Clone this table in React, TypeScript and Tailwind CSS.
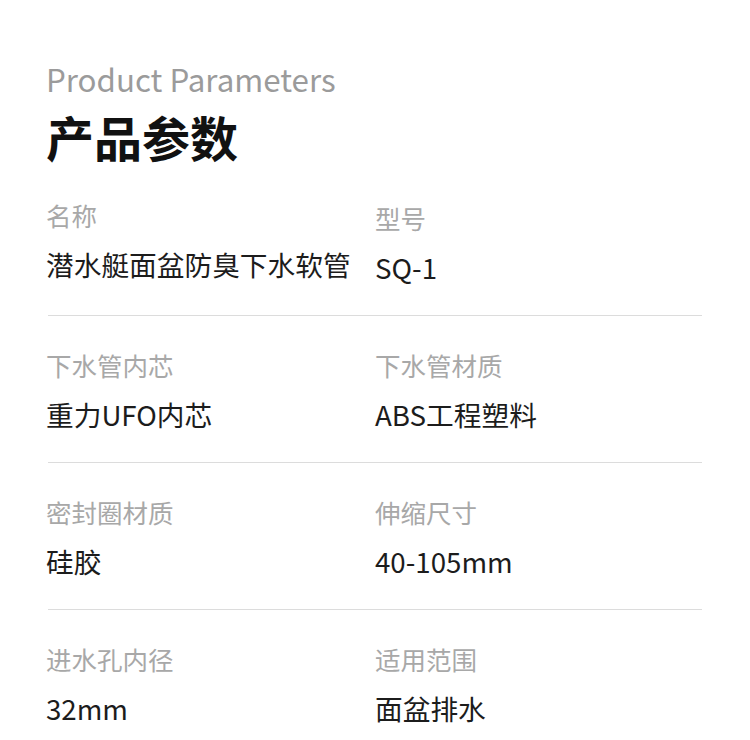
const rows = [
    { a: { label: "名称", value: "潜水艇面盆防臭下水软管" }, b: { label: "型号", value: "SQ-1" } },
    { a: { label: "下水管内芯", value: "重力UFO内芯" }, b: { label: "下水管材质", value: "ABS工程塑料" } },
    { a: { label: "密封圈材质", value: "硅胶" }, b: { label: "伸缩尺寸", value: "40-105mm" } },
    { a: { label: "进水孔内径", value: "32mm" }, b: { label: "适用范围", value: "面盆排水" } }
];

function Cell({ label, value }: { label: string; value: string }) {
    return (
        <div className="flex flex-col">
            <span className="text-[25.5px] leading-[34px] text-[#a8a8a8]">{label}</span>
            <span className="mt-[14px] text-[27.7px] leading-[36px] text-[#1c1c1c]">{value}</span>
        </div>
    );
}

export default function App() {
    return (
        <div
            className="w-[750px] h-[740px] bg-white overflow-hidden pl-[46px] pr-[48px] pt-[58px]"
            style={{ fontFamily: '"Noto Sans CJK SC", "Noto Sans", sans-serif' }}
        >
            <div className="text-[31.3px] leading-[42px] font-normal text-[#9b9b9b]">Product Parameters</div>
            <div className="mt-[8px] text-[48px] leading-[56px] font-bold text-[#111111]">产品参数</div>

            <div className="mt-[34px] flex flex-col">
                {rows.map((row, i) => (
                    <div key={i} className="flex flex-col">
                        <div className="grid grid-cols-[329px_1fr]">
                            <Cell {...row.a} />
                            <div className={i === 0 ? "pt-[3px]" : ""}>
                                <Cell {...row.b} />
                            </div>
                        </div>
                        {i < rows.length - 1 && (
                            <div className="mt-[30px] mb-[32px] h-px ml-[2px] bg-[#dcdcdc]" />
                        )}
                    </div>
                ))}
            </div>
        </div>
    );
}
